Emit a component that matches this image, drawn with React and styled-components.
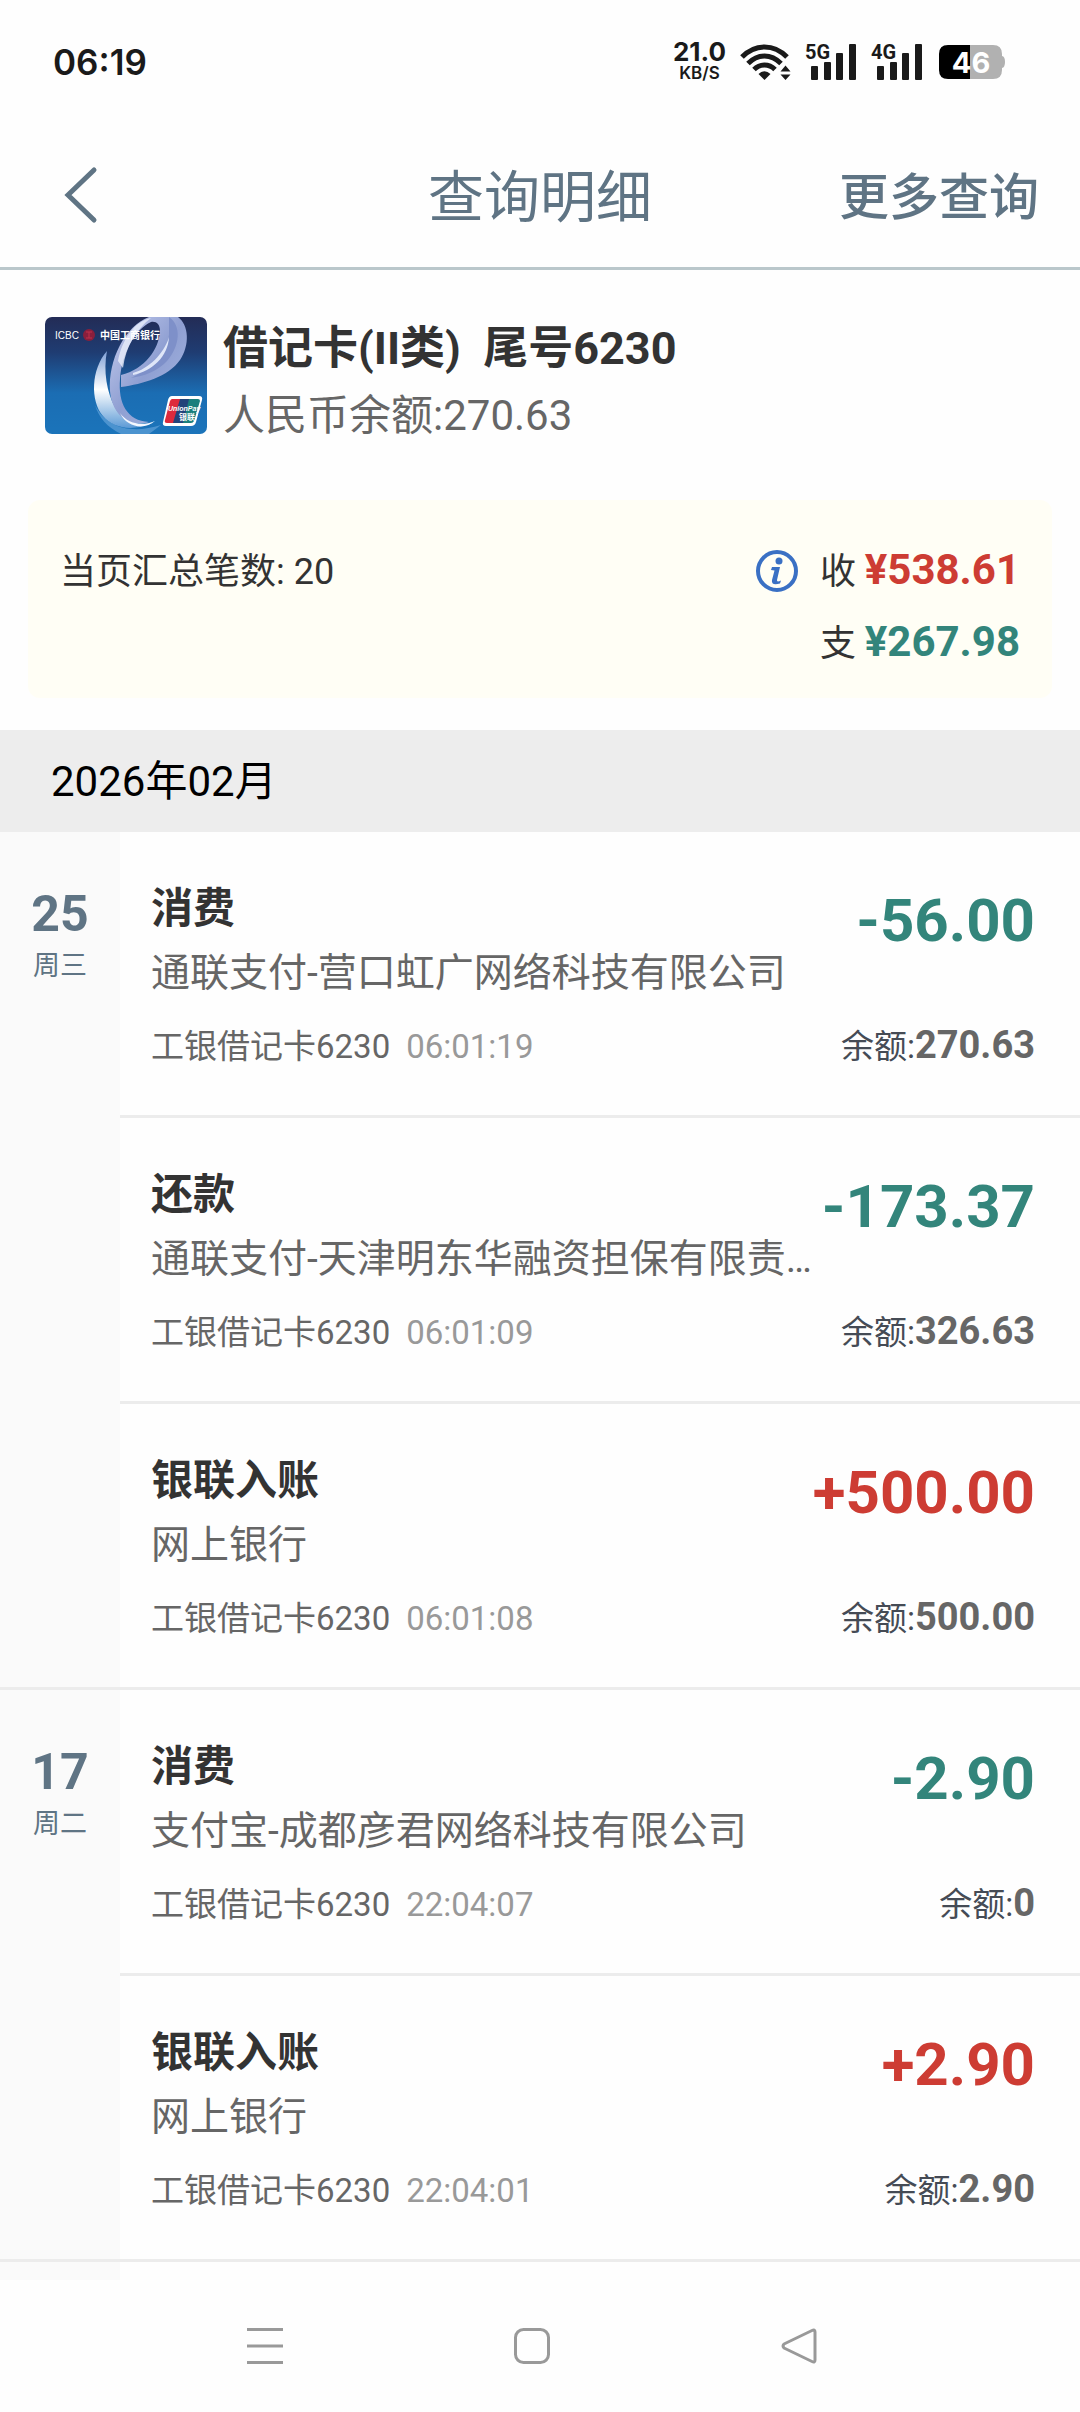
import styled, { createGlobalStyle } from 'styled-components';

const GlobalStyle = createGlobalStyle`
  * {
    box-sizing: border-box;
  }
  body {
    margin: 0;
    background: #fefefe;
    color: #333333;
    font-family: Roboto, 'Noto Sans CJK SC', sans-serif;
  }
  button {
    border: 0;
    padding: 0;
    background: none;
    font-family: inherit;
    cursor: pointer;
  }
`;

const Page = styled.div`
  min-height: 100vh;
  display: flex;
  flex-direction: column;
`;

/* status bar */

const StatusBar = styled.div`
  height: 124px;
  padding: 0 75px 0 53px;
  display: flex;
  align-items: center;
  justify-content: space-between;
  color: #1a1a1a;
  font-family: Inter, sans-serif;
`;

const Clock = styled.div`
  font-size: 35px;
  font-weight: 600;
  line-height: 44px;
`;

const StatusIcons = styled.div`
  display: flex;
  align-items: center;
  gap: 14px;
  svg {
    display: block;
  }
`;

const NetSpeed = styled.div`
  text-align: center;
  font-size: 26px;
  font-weight: 700;
  line-height: 22px;
`;

const SpeedUnit = styled.div`
  font-size: 17px;
  font-weight: 600;
  line-height: 20px;
`;

/* header */

const Header = styled.header`
  height: 146px;
  padding: 0 41px;
  display: grid;
  grid-template-columns: 1fr auto 1fr;
  align-items: center;
  border-bottom: 3px solid #bac7cb;
  color: #5f7484;
`;

const BackButton = styled.button`
  justify-self: start;
  padding-left: 19px;
  svg {
    display: block;
  }
`;

const Title = styled.h1`
  margin: 0;
  padding-top: 4px;
  font-size: 56px;
  font-weight: 400;
  line-height: 70px;
`;

const MoreButton = styled.button`
  justify-self: end;
  padding-top: 4px;
  color: #5f7484;
  font-size: 50px;
  font-weight: 500;
  line-height: 70px;
`;

/* card */

const CardInfo = styled.section`
  padding: 47px 45px 49px;
  display: flex;
  gap: 16px;
  svg {
    display: block;
  }
`;

const CardName = styled.div`
  font-size: 45px;
  font-weight: 700;
  line-height: 64px;
  white-space: pre;
`;

const CardBalance = styled.div`
  color: #666666;
  font-size: 42px;
  line-height: 70px;
`;

/* summary */

const Summary = styled.section`
  margin: 0 28px 32px;
  padding: 36px 32px 18px;
  display: flex;
  justify-content: space-between;
  border-radius: 12px;
  background: #fffef5;
  font-size: 36px;
  line-height: 72px;
`;

const Totals = styled.div`
  display: grid;
  grid-template-columns: 44px auto;
  column-gap: 21px;
  align-items: center;
`;

const InfoButton = styled.button`
  svg {
    display: block;
  }
`;

const Total = styled.div`
  grid-column: 2;
`;

const Money = styled.b`
  color: ${({ $income }) => ($income ? '#cd3c33' : '#33857b')};
  font-size: 42px;
  line-height: 1;
`;

const Month = styled.h2`
  margin: 0;
  padding: 2px 51px 0;
  background: #ededed;
  color: #000000;
  font-size: 42px;
  font-weight: 400;
  line-height: 100px;
`;

/* list */

const Day = styled.section`
  display: grid;
  grid-template-columns: 120px minmax(0, 1fr);
  border-bottom: 3px solid #ececec;
`;

const DayLabel = styled.div`
  padding-top: 51px;
  background: #fafafa;
  color: #5f7484;
  text-align: center;
`;

/* keeps the date column going down to the navigation bar */
const ColumnTail = styled.div`
  flex: 1;
  width: 120px;
  min-height: 18px;
  background: #fafafa;
`;

const DayNumber = styled.div`
  font-size: 50px;
  font-weight: 700;
  line-height: 62px;
`;

const Weekday = styled.div`
  font-size: 27px;
  line-height: 42px;
`;

const Record = styled.article`
  padding: 48px 45px 29px 31px;
  & + & {
    border-top: 3px solid #ececec;
  }
`;

const RecordTop = styled.div`
  display: grid;
  grid-template-columns: minmax(0, 1fr) auto;
  column-gap: 6px;
`;

const Kind = styled.div`
  font-size: 42px;
  font-weight: 700;
  line-height: 58px;
`;

const Payee = styled.div`
  color: #666666;
  font-size: 39px;
  line-height: 70px;
  overflow: hidden;
  text-overflow: ellipsis;
  white-space: nowrap;
`;

const Amount = styled.div`
  color: ${({ $income }) => ($income ? '#cd3c33' : '#33857b')};
  font-size: 60px;
  font-weight: 700;
  line-height: 82px;
`;

const RecordMeta = styled.div`
  display: flex;
  justify-content: space-between;
  color: #666666;
  font-size: 33px;
  line-height: 78px;
`;

const Time = styled.time`
  margin-left: 16px;
  color: #999999;
`;

const Balance = styled.div`
  color: #454b55;
  b {
    color: #666666;
    font-size: 38px;
    line-height: 1;
  }
`;

/* system navigation */

const NavBar = styled.nav`
  height: 132px;
  padding: 0 147px 0 131px;
  display: grid;
  grid-template-columns: repeat(3, 1fr);
  place-items: center;
  svg {
    display: block;
  }
`;

const days = [
  {
    day: '25',
    weekday: '周三',
    records: [
      { kind: '消费', payee: '通联支付-营口虹广网络科技有限公司', amount: '-56.00', time: '06:01:19', balance: '270.63' },
      { kind: '还款', payee: '通联支付-天津明东华融资担保有限责…', amount: '-173.37', time: '06:01:09', balance: '326.63' },
      { kind: '银联入账', payee: '网上银行', amount: '+500.00', time: '06:01:08', balance: '500.00' },
    ],
  },
  {
    day: '17',
    weekday: '周二',
    records: [
      { kind: '消费', payee: '支付宝-成都彦君网络科技有限公司', amount: '-2.90', time: '22:04:07', balance: '0' },
      { kind: '银联入账', payee: '网上银行', amount: '+2.90', time: '22:04:01', balance: '2.90' },
    ],
  },
];

function WifiIcon() {
  return (
    <svg width="51" height="36" viewBox="0 0 51 36">
      <g fill="none" stroke="#1a1a1a" strokeWidth="5">
        <path d="M2 13C15 -0.500 34 -0.500 47 13" />
        <path d="M8 19.500C18 9.500 31 9.500 41 19.500" />
        <path d="M14 25.500C20 19.500 29 19.500 35 25.500" />
      </g>
      <path d="M18.500 30Q24.500 24.500 30.500 30L24.500 36Z" fill="#1a1a1a" />
      <path d="M45.500 21.500L50.500 27.500H40.500ZM45.500 36L50.500 30.500H40.500Z" fill="#1a1a1a" />
    </svg>
  );
}

function SignalIcon({ label }) {
  return (
    <svg width="52" height="48" viewBox="0 -6 52 48" fill="#1a1a1a">
      <text x="0" y="15" fontFamily="Roboto, sans-serif" fontSize="20" fontWeight="700">{label}</text>
      <rect x="6" y="22" width="7" height="14" rx="1" />
      <rect x="19" y="18" width="7" height="18" rx="1" />
      <rect x="31" y="9" width="7" height="27" rx="1" />
      <rect x="44" y="0" width="7" height="36" rx="1" />
    </svg>
  );
}

function BatteryIcon() {
  return (
    <svg width="68" height="34" viewBox="-2 0 68 34">
      <path d="M31 0H54Q63 0 63 9V11Q66 11.500 66 17Q66 22.500 63 23V25Q63 34 54 34H31Z" fill="#b1b1b1" />
      <path d="M31 0H9Q0 0 0 9V25Q0 34 9 34H31Z" fill="#000000" />
      <text x="32" y="28" textAnchor="middle" fill="#ffffff" fontFamily="Inter, sans-serif" fontSize="29" fontWeight="700">46</text>
    </svg>
  );
}

function CardArt() {
  return (
    <svg width="162" height="117" viewBox="0 0 162 117" role="img" aria-label="ICBC 中国工商银行">
      <defs>
        <linearGradient id="cardBg" x1="0" y1="0" x2="0" y2="1">
          <stop offset="0" stopColor="#232c56" />
          <stop offset="0.3" stopColor="#1f3c72" />
          <stop offset="0.65" stopColor="#1b6db3" />
          <stop offset="1" stopColor="#1b74ba" />
        </linearGradient>
        <linearGradient id="ribbon" x1="0" y1="0" x2="1" y2="1">
          <stop offset="0" stopColor="#c5cdee" />
          <stop offset="0.5" stopColor="#8f9fd2" />
          <stop offset="1" stopColor="#a9bbe4" />
        </linearGradient>
        <linearGradient id="shine" x1="0" y1="0" x2="0" y2="1">
          <stop offset="0" stopColor="#7ea0d6" />
          <stop offset="0.5" stopColor="#ffffff" />
          <stop offset="1" stopColor="#5d9bd6" />
        </linearGradient>
        <clipPath id="cardShape">
          <rect width="162" height="117" rx="7" />
        </clipPath>
      </defs>
      <g clipPath="url(#cardShape)">
        <rect width="162" height="117" fill="url(#cardBg)" />
        <path d="M50 88C62 112 88 117 116 108L104 117H76C62 110 54 101 50 88Z" fill="#4b93cf" />
        <path d="M62 34C46 52 45 84 58 99C68 111 86 115 108 106C92 109 76 104 70 90C62 76 58 54 62 34Z" fill="url(#shine)" />
        <path d="M76 58C100 52 114 32 115 14C115 7 111 4 106 5C90 12 77 36 75 62C73 86 82 104 104 105C84 111 67 98 65 74C63 43 80 9 104 0H133C144 8 145 28 135 43C123 60 98 67 76 70Z" fill="url(#ribbon)" />
        <path d="M73 44C77 22 90 4 106 1C92 12 81 28 78 51Z" fill="#e9edfa" opacity="0.8" />
        <path d="M124 0C137 9 135 29 122 44C113 54 99 59 86 61C102 53 121 40 124 18Z" fill="#7e90c9" />
        <path d="M88 56C103 52 119 37 124 20C123 40 107 54 88 58Z" fill="#dfe6f8" />
        <path d="M75 96C82 106 96 110 110 104C100 113 82 111 75 96Z" fill="#f4f8ff" />
        <text x="10" y="22" fill="#ffffff" fontFamily="Liberation Sans, sans-serif" fontSize="10">ICBC</text>
        <circle cx="44" cy="18" r="6" fill="#8a1f3c" />
        <path d="M41 15H47M41 21H47M44 15V21" stroke="#c0304a" fill="none" />
        <text x="55" y="22" fill="#ffffff" fontFamily="Noto Sans CJK SC, sans-serif" fontSize="10" fontWeight="700">中国工商银行</text>
        <path d="M127 79H154Q158 79 157 83L151 105Q150 109 146 109H121Q117 109 118 105L123 83Q124 79 127 79Z" fill="#ffffff" />
        <path d="M127 82H137L131 106H122Q119 106 120 103L125 84Q126 82 127 82Z" fill="#dd2a3c" />
        <path d="M135 82H146L140 106H128Z" fill="#22437a" />
        <path d="M144 82H153Q155 82 155 84L149 104Q148 106 146 106H138Z" fill="#1a7f7c" />
        <text x="123" y="94" fill="#ffffff" fontFamily="Liberation Sans, sans-serif" fontSize="7" fontWeight="700" fontStyle="italic">UnionPay</text>
        <text x="134" y="103" fill="#ffffff" fontFamily="Noto Sans CJK SC, sans-serif" fontSize="8" fontWeight="700">银联</text>
      </g>
    </svg>
  );
}

function InfoIcon() {
  return (
    <svg width="44" height="44" viewBox="0 0 44 44">
      <circle cx="22" cy="21" r="19" fill="none" stroke="#3a70c4" strokeWidth="4" />
      <circle cx="24" cy="11" r="3.500" fill="#3a70c4" />
      <path d="M17 17H25L22 30Q21.500 32.500 26 30.500L25 33.500Q16 36 17 30L19.500 20.500L16 20Z" fill="#3a70c4" />
    </svg>
  );
}

function RecordItem({ record }) {
  const income = record.amount.startsWith('+');

  return (
    <Record>
      <RecordTop>
        <div>
          <Kind>{record.kind}</Kind>
          <Payee>{record.payee}</Payee>
        </div>
        <Amount $income={income}>{record.amount}</Amount>
      </RecordTop>
      <RecordMeta>
        <div>
          工银借记卡6230
          <Time>{record.time}</Time>
        </div>
        <Balance>余额:<b>{record.balance}</b></Balance>
      </RecordMeta>
    </Record>
  );
}

export default function App() {
  return (
    <>
      <GlobalStyle />
      <Page>
        <StatusBar>
          <Clock>06:19</Clock>
          <StatusIcons>
            <NetSpeed>
              21.0
              <SpeedUnit>KB/S</SpeedUnit>
            </NetSpeed>
            <WifiIcon />
            <SignalIcon label="5G" />
            <SignalIcon label="4G" />
            <BatteryIcon />
          </StatusIcons>
        </StatusBar>

        <Header>
          <BackButton aria-label="返回">
            <svg width="44" height="60" viewBox="0 0 44 60" fill="none" stroke="#5f7484" strokeWidth="5" strokeLinecap="round">
              <path d="M34 4L8 29L34 54" />
            </svg>
          </BackButton>
          <Title>查询明细</Title>
          <MoreButton>更多查询</MoreButton>
        </Header>

        <CardInfo>
          <CardArt />
          <div>
            <CardName>借记卡(II类)  尾号6230</CardName>
            <CardBalance>人民币余额:270.63</CardBalance>
          </div>
        </CardInfo>

        <Summary>
          <div>当页汇总笔数: 20</div>
          <Totals>
            <InfoButton aria-label="说明">
              <InfoIcon />
            </InfoButton>
            <Total>收 <Money $income>¥538.61</Money></Total>
            <Total>支 <Money>¥267.98</Money></Total>
          </Totals>
        </Summary>

        <Month>2026年02月</Month>

        {days.map(item => (
          <Day key={item.day}>
            <DayLabel>
              <DayNumber>{item.day}</DayNumber>
              <Weekday>{item.weekday}</Weekday>
            </DayLabel>
            <div>
              {item.records.map(record => (
                <RecordItem key={record.time} record={record} />
              ))}
            </div>
          </Day>
        ))}
        <ColumnTail />

        <NavBar>
          <button aria-label="最近任务">
            <svg width="36" height="36" viewBox="0 0 36 36" stroke="#999999" strokeWidth="3">
              <path d="M0 1.500H36M0 18H36M0 34.500H36" />
            </svg>
          </button>
          <button aria-label="主页">
            <svg width="36" height="36" viewBox="0 0 36 36" fill="none" stroke="#999999" strokeWidth="3">
              <rect x="1.500" y="1.500" width="33" height="33" rx="8" />
            </svg>
          </button>
          <button aria-label="返回上一级">
            <svg width="36" height="36" viewBox="0 0 36 36" fill="none" stroke="#999999" strokeWidth="3" strokeLinejoin="round">
              <path d="M31 2.500L3 16Q1 18 3 20L31 33.500Q34 35 34 32V4Q34 1 31 2.500Z" />
            </svg>
          </button>
        </NavBar>
      </Page>
    </>
  );
}
